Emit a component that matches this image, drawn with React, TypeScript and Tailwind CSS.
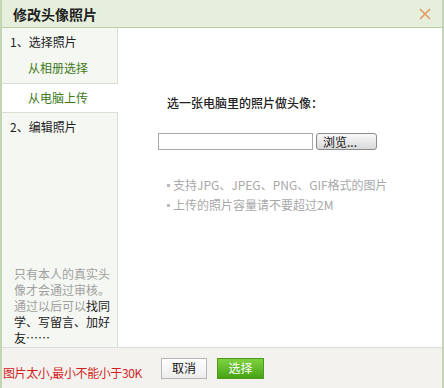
import React from "react";

const font = { fontFamily: '"Noto Sans CJK SC", "Liberation Sans", sans-serif' };

export default function App() {
  return (
    <div
      className="w-[444px] h-[388px] bg-white border-x-2 border-[#c3d6b3] flex flex-col text-[12px] leading-none text-[#222]"
      style={font}
    >
      <div className="h-[28px] shrink-0 bg-[#e6efdc] border-b border-[#b8cfa6] flex items-center justify-between pl-[11px] pr-[10px]">
        <span className="text-[14px] font-bold text-[#222]">修改头像照片</span>
        <svg width="14" height="14" viewBox="0 0 14 14">
          <path d="M2 2 L12 12 M12 2 L2 12" stroke="#e39a63" strokeWidth="1.6" />
        </svg>
      </div>
      <div className="flex flex-1 min-h-0">
        <div className="w-[116px] shrink-0 flex flex-col bg-[#f5f7f2]">
          <div className="h-[56px] border-b border-r border-[#d9e0d2] pt-[8px] pl-[8px] flex flex-col gap-[14px]">
            <span>1、选择照片</span>
            <span className="pl-[18px] text-[#3d7a18]">从相册选择</span>
          </div>
          <div className="h-[29px] bg-white border-b border-[#d9e0d2] pl-[26px] flex items-center text-[#3d7a18]">
            从电脑上传
          </div>
          <div className="flex-1 border-r border-[#d9e0d2] pt-[8px] pl-[8px] flex flex-col justify-between pb-[1px]">
            <span>2、编辑照片</span>
            <div className="pl-[4px] leading-[16px] text-[#a0a0a0] text-[12px] flex flex-col">
              <div>只有本人的真实头</div>
              <div>像才会通过审核。</div>
              <div>
                通过以后可以<span className="text-[#222]">找同</span>
              </div>
              <div className="text-[#222]">学、写留言、加好</div>
              <div className="text-[#222]">友……</div>
            </div>
          </div>
        </div>
        <div className="flex-1 flex flex-col pl-[40px] pt-[69px]">
          <div className="pl-[9px] text-[12px] font-medium">选一张电脑里的照片做头像：</div>
          <div className="flex items-center gap-[3px] mt-[24px]">
            <div className="w-[155px] h-[17px] border border-[#a9a9a9] bg-white" />
            <div className="w-[61px] h-[17px] rounded-[3px] border border-[#8a8a8a] bg-gradient-to-b from-[#f8f8f8] to-[#d9d9d9] text-[12px] flex items-center pl-[6px] text-[#111]">
              浏览...
            </div>
          </div>
          <div className="mt-[29px] pl-[9px] flex flex-col gap-[8px] text-[#a8a8a8]">
            <div className="flex items-center gap-[3px]">
              <span className="w-[3px] h-[3px] bg-[#bbb] inline-block" />
              <span>支持JPG、JPEG、PNG、GIF格式的图片</span>
            </div>
            <div className="flex items-center gap-[3px]">
              <span className="w-[3px] h-[3px] bg-[#bbb] inline-block" />
              <span>上传的照片容量请不要超过2M</span>
            </div>
          </div>
        </div>
      </div>
      <div className="h-[41px] shrink-0 bg-[#f3f2ee] border-t border-[#dddddd] flex items-center">
        <span className="text-[#d21e1e] text-[12px] w-[159px] shrink-0 whitespace-nowrap tracking-[-0.4px] pl-[1px] mt-[10px]">
          图片太小,最小不能小于30K
        </span>
        <div className="w-[46px] h-[21px] border border-[#b5b5b5] bg-gradient-to-b from-white to-[#ececec] flex items-center justify-center text-[12px] text-[#111]">
          取消
        </div>
        <div className="ml-[10px] w-[47px] h-[21px] border border-[#4d9a1f] bg-gradient-to-b from-[#7fd23f] to-[#45a312] flex items-center justify-center text-[12px] text-white">
          选择
        </div>
      </div>
    </div>
  );
}
